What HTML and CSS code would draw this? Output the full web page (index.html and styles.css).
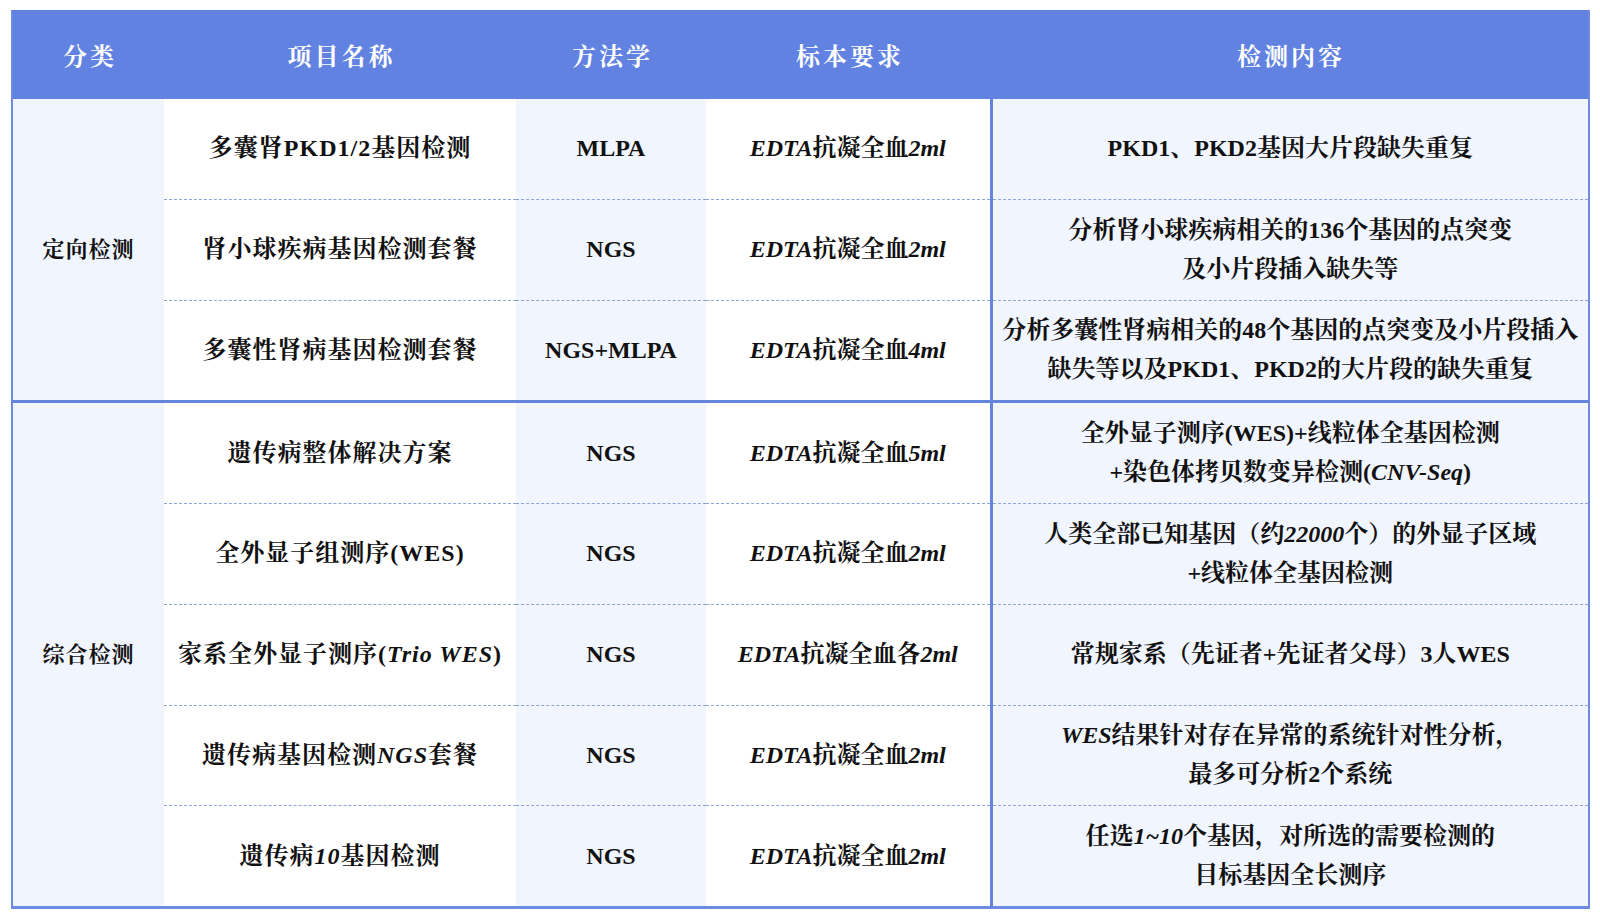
FILE: index.html
```html
<!DOCTYPE html>
<html lang="zh-CN">
<head>
<meta charset="utf-8">
<title>检测项目</title>
<link rel="stylesheet" href="styles.css">
</head>
<body>
<table class="grid">
  <colgroup>
    <col class="c1"><col class="c2"><col class="c3"><col class="c4"><col class="c5">
  </colgroup>
  <thead>
    <tr>
      <th>分类</th>
      <th>项目名称</th>
      <th>方法学</th>
      <th>标本要求</th>
      <th>检测内容</th>
    </tr>
  </thead>
  <tbody class="group">
    <tr>
      <td rowspan="3" class="cat">定向检测</td>
      <td class="name">多囊肾PKD1/2基因检测</td>
      <td class="method">MLPA</td>
      <td class="sample"><i>EDTA</i>抗凝全血<i>2ml</i></td>
      <td class="content"><span>PKD1、PKD2基因大片段缺失重复</span></td>
    </tr>
    <tr>
      <td class="name">肾小球疾病基因检测套餐</td>
      <td class="method">NGS</td>
      <td class="sample"><i>EDTA</i>抗凝全血<i>2ml</i></td>
      <td class="content"><span>分析肾小球疾病相关的136个基因的点突变<br>及小片段插入缺失等</span></td>
    </tr>
    <tr>
      <td class="name">多囊性肾病基因检测套餐</td>
      <td class="method">NGS+MLPA</td>
      <td class="sample"><i>EDTA</i>抗凝全血<i>4ml</i></td>
      <td class="content"><span>分析多囊性肾病相关的48个基因的点突变及小片段插入<br>缺失等以及PKD1、PKD2的大片段的缺失重复</span></td>
    </tr>
  </tbody>
  <tbody class="group">
    <tr>
      <td rowspan="5" class="cat">综合检测</td>
      <td class="name">遗传病整体解决方案</td>
      <td class="method">NGS</td>
      <td class="sample"><i>EDTA</i>抗凝全血<i>5ml</i></td>
      <td class="content"><span>全外显子测序(WES)+线粒体全基因检测<br>+染色体拷贝数变异检测(<i>CNV-Seq</i>)</span></td>
    </tr>
    <tr>
      <td class="name">全外显子组测序(WES)</td>
      <td class="method">NGS</td>
      <td class="sample"><i>EDTA</i>抗凝全血<i>2ml</i></td>
      <td class="content"><span>人类全部已知基因（约<i>22000</i>个）的外显子区域<br>+线粒体全基因检测</span></td>
    </tr>
    <tr>
      <td class="name">家系全外显子测序(<i>Trio WES</i>)</td>
      <td class="method">NGS</td>
      <td class="sample"><i>EDTA</i>抗凝全血各<i>2ml</i></td>
      <td class="content"><span>常规家系（先证者+先证者父母）3人WES</span></td>
    </tr>
    <tr>
      <td class="name">遗传病基因检测<i>NGS</i>套餐</td>
      <td class="method">NGS</td>
      <td class="sample"><i>EDTA</i>抗凝全血<i>2ml</i></td>
      <td class="content"><span><i>WES</i>结果针对存在异常的系统针对性分析，<br>最多可分析2个系统</span></td>
    </tr>
    <tr>
      <td class="name">遗传病<i>10</i>基因检测</td>
      <td class="method">NGS</td>
      <td class="sample"><i>EDTA</i>抗凝全血<i>2ml</i></td>
      <td class="content"><span>任选<i>1~10</i>个基因，对所选的需要检测的<br>目标基因全长测序</span></td>
    </tr>
  </tbody>
</table>
</body>
</html>
```

FILE: styles.css
```css
html, body {
  margin: 0;
  padding: 0;
  background: #ffffff;
}

.grid {
  margin: 10px 0 0 11px;
  width: 1577px;
  border-collapse: collapse;
  table-layout: fixed;
  font-family: "Liberation Serif", "Noto Serif CJK SC", "Noto Sans CJK SC", serif;
  color: #111111;
  border-left: 2px solid #6d8ce0;
  border-right: 2px solid #6d8ce0;
  border-bottom: 3px solid #6d8ce0;
}

.c1 { width: 152px; }
.c2 { width: 352px; }
.c3 { width: 190px; }
.c4 { width: 285px; }
.c5 { width: 598px; }

.grid th {
  background: #6282e2;
  color: #ffffff;
  height: 89px;
  padding: 0 0 0 3px;
  font-size: 24px;
  font-weight: 700;
  letter-spacing: 3px;
  text-align: center;
  vertical-align: middle;
  border: 0;
}

.grid td {
  height: 99.75px;
  padding: 0;
  text-align: center;
  vertical-align: middle;
  font-size: 24px;
  font-weight: 700;
  line-height: 39px;
}

.grid td i {
  font-style: italic;
}

.cat {
  background: #f1f5fe;
  font-size: 22px !important;
  letter-spacing: 1px;
}

.name {
  background: #ffffff;
  letter-spacing: 1px;
}

.method {
  background: #f1f5fe;
}

.sample {
  background: #ffffff;
}

.content {
  background: #f1f5fe;
  border-left: 3px solid #6585dd;
}

.content > span {
  display: inline-block;
  letter-spacing: 0;
}

.group tr + tr td {
  border-top: 1px dashed #8fa3d6;
}

.group + .group tr:first-child td {
  border-top: 3px solid #6585dd;
}
```
